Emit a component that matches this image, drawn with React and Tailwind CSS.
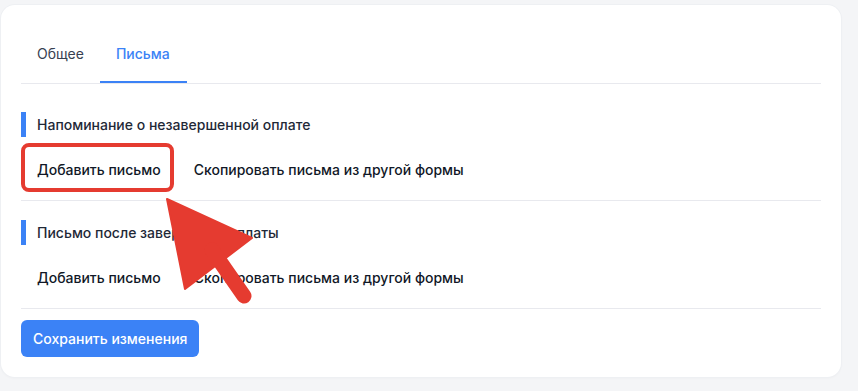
import React from "react";

function Section({ title }) {
  return (
    <div className="pt-[19px] pb-2 border-b border-[#e8e9ee]">
      <div className="h-[25px] flex items-center border-l-[5px] border-[#3b82f6] pl-[11px] text-[14px] font-medium text-[#1f2937] leading-5">
        {title}
      </div>
      <div className="mt-[11px] h-11 flex items-center">
        <button className="h-11 px-4 text-[14px] font-medium text-[#111827] leading-5">
          Добавить письмо
        </button>
        <button className="h-11 px-4 ml-px text-[14px] font-medium text-[#111827] leading-5">
          Скопировать письма из другой формы
        </button>
      </div>
    </div>
  );
}

export default function App() {
  return (
    <div
      className="relative w-[858px] h-[391px] bg-[#f4f5f7] overflow-hidden"
      style={{ fontFamily: "Inter, 'Noto Sans', sans-serif" }}
    >
      <div className="ml-px mt-[5px] w-[840px] bg-white rounded-[14px] shadow-[0_0_0_1px_#eef0f3,0_1px_3px_rgba(0,0,0,0.04)] p-5">
        <div className="flex border-b border-[#e8e9ee]">
          <div className="h-[58px] px-4 flex items-center text-[14px] text-[#374151] border-b-2 border-transparent">
            Общее
          </div>
          <div className="h-[58px] pl-4 pr-[17px] flex items-center text-[14px] font-medium text-[#3b82f6] border-b-2 border-[#3b82f6]">
            Письма
          </div>
        </div>
        <div className="pt-[9px]">
          <Section title="Напоминание о незавершенной оплате" />
          <Section title="Письмо после завершения оплаты" />
        </div>
        <button className="mt-[11px] h-[37px] px-3 rounded-md bg-[#3b82f6] text-white text-[14px] font-medium">
          Сохранить изменения
        </button>
      </div>

      <div className="absolute left-[21px] top-[143px] w-[153px] h-[49px] border-4 border-[#e53b30] rounded-lg" />
      <svg className="absolute left-0 top-0" width="858" height="391" viewBox="0 0 858 391">
        <polygon points="167,199 185,289 252,238" fill="#e53b30" strokeLinejoin="round" stroke="#e53b30" strokeWidth="2" />
        <line x1="212" y1="250" x2="244" y2="296" stroke="#e53b30" strokeWidth="15" strokeLinecap="round" />
      </svg>
    </div>
  );
}
